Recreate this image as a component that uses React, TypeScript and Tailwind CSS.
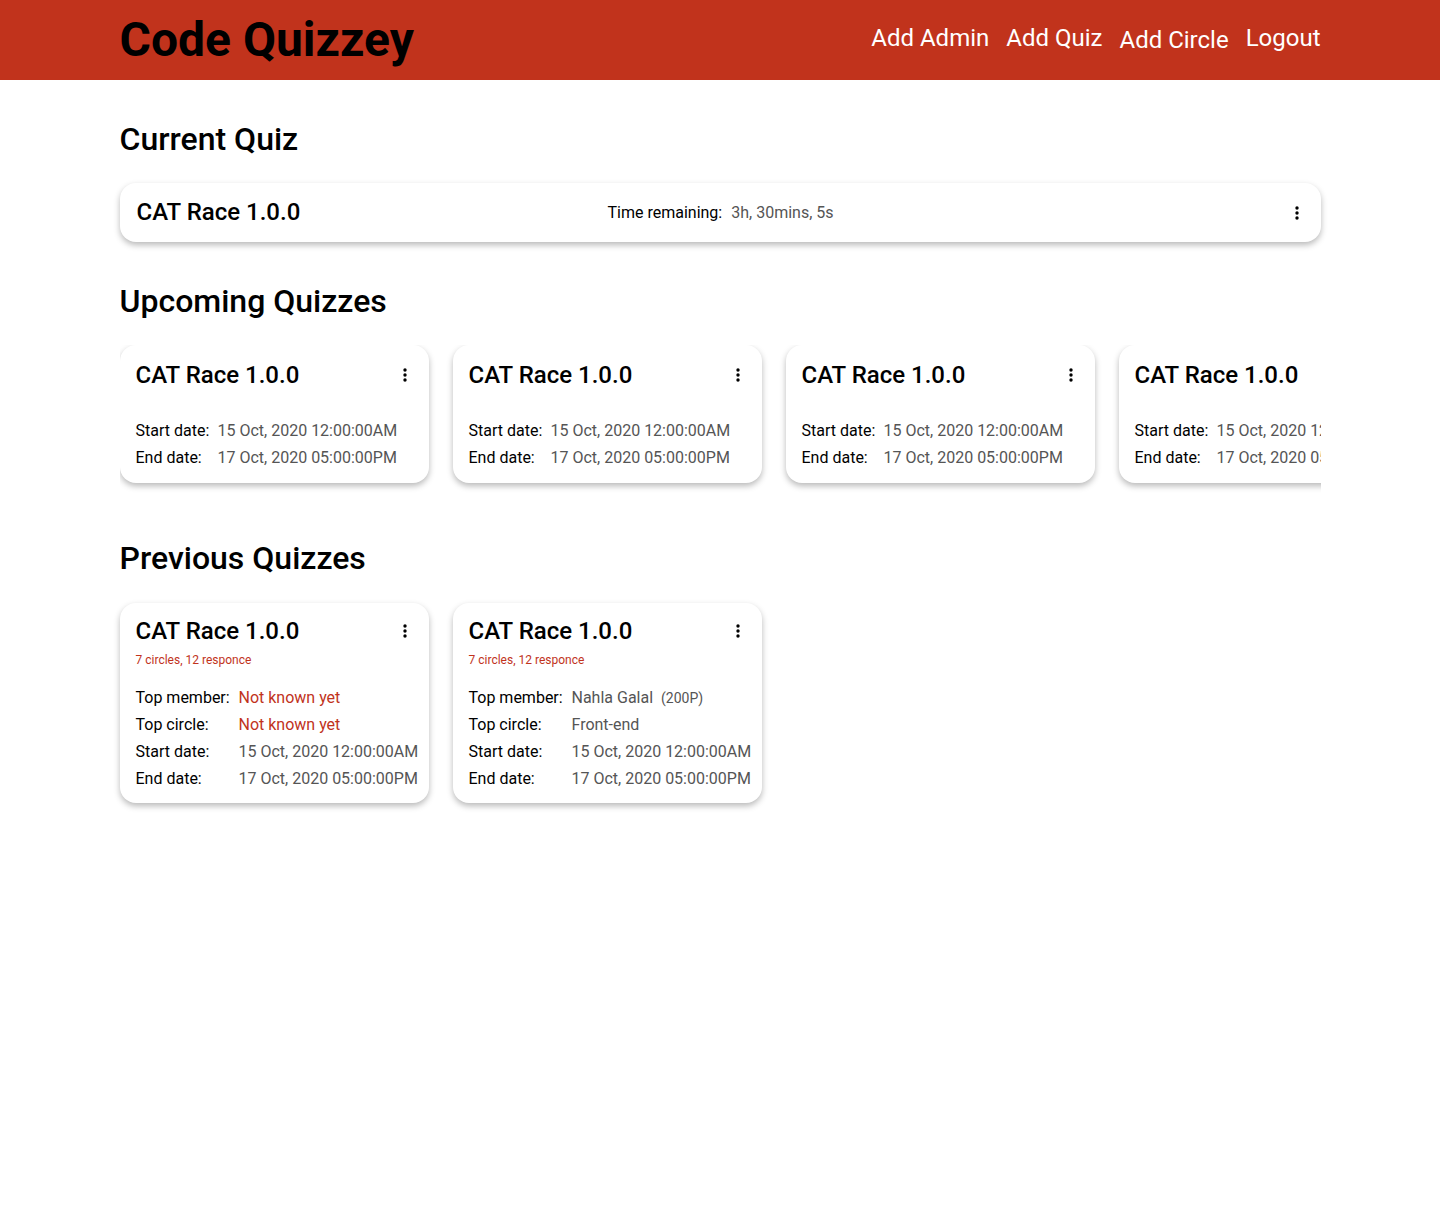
import React from 'react';

const RED = 'text-[#c1331c]';

function Kebab() {
    return (
        <svg width="6" height="16" viewBox="0 0 6 16" className="shrink-0">
            <circle cx="3" cy="3" r="1.7" fill="#000" />
            <circle cx="3" cy="8" r="1.7" fill="#000" />
            <circle cx="3" cy="13" r="1.7" fill="#000" />
        </svg>
    );
}

type Row = { label: string; value: React.ReactNode; red?: boolean };

function QuizCard({ rows, sub, labelW }: { rows: Row[]; sub?: boolean; labelW: string }) {
    return (
        <div
            className={`w-[309px] shrink-0 bg-white rounded-[16px] shadow-[0_3px_6px_rgba(0,0,0,0.28)] pl-4 pr-[21px] ${
                sub ? 'pt-[14px] pb-[11px]' : 'pt-4 pb-3'
            }`}
        >
            <div className="flex items-center justify-between h-[28px]">
                <span className="text-[24px] font-medium leading-[28px] text-black">CAT Race 1.0.0</span>
                <Kebab />
            </div>
            {sub ? (
                <div className={`text-[12px] leading-[16px] mt-[7px] ${RED}`}>7 circles, 12 responce</div>
            ) : null}
            <div className={sub ? 'mt-[16px]' : 'mt-[28px]'}>
                {rows.map((r) => (
                    <div key={r.label} className="flex h-[27px] items-center text-[16px] leading-[27px] whitespace-nowrap">
                        <span className={`${labelW} shrink-0 text-black`}>{r.label}</span>
                        <span className={r.red ? RED : 'text-[#555]'}>{r.value}</span>
                    </div>
                ))}
            </div>
        </div>
    );
}

export default function App() {
    const upcomingRows: Row[] = [
        { label: 'Start date:', value: '15 Oct, 2020 12:00:00AM' },
        { label: 'End date:', value: '17 Oct, 2020 05:00:00PM' },
    ];

    return (
        <div className="min-h-[1209px] bg-white font-['Roboto',sans-serif]">
            <header className="h-[80px] bg-[#c1331c]">
                <div className="w-[1201px] mx-auto h-full flex items-center justify-between">
                    <h1 className="text-[48px] font-bold leading-none text-black -mt-[1px]">Code Quizzey</h1>
                    <nav className="flex items-center gap-[17px] text-[24px] text-white leading-none -mt-[4px]">
                        <span>Add Admin</span>
                        <span>Add Quiz</span>
                        <span className="mt-[4px]">Add Circle</span>
                        <span>Logout</span>
                    </nav>
                </div>
            </header>

            <main className="w-[1201px] mx-auto">
                <h2 className="text-[32px] font-medium leading-[38px] text-black mt-[40px]">Current Quiz</h2>
                <div className="mt-[25px] h-[59px] bg-white rounded-[16px] shadow-[0_3px_6px_rgba(0,0,0,0.28)] pl-[17px] pr-[21px] flex items-center">
                    <span className="w-[471px] text-[24px] font-medium leading-[28px] text-black -mt-[1px]">CAT Race 1.0.0</span>
                    <span className="text-[16px] text-black">Time remaining:</span>
                    <span className="ml-[9px] text-[16px] text-[#555]">3h, 30mins, 5s</span>
                    <span className="ml-auto">
                        <Kebab />
                    </span>
                </div>

                <h2 className="text-[32px] font-medium leading-[38px] text-black mt-[40px]">Upcoming Quizzes</h2>
                <div className="mt-[25px] overflow-hidden pb-4">
                    <div className="flex gap-[24px]">
                        {[0, 1, 2, 3].map((i) => (
                            <QuizCard key={i} rows={upcomingRows} labelW="w-[82px]" />
                        ))}
                    </div>
                </div>

                <h2 className="text-[32px] font-medium leading-[38px] text-black mt-[40px]">Previous Quizzes</h2>
                <div className="mt-[26px] flex gap-[24px] pb-4">
                    <QuizCard
                        sub
                        labelW="w-[103px]"
                        rows={[
                            { label: 'Top member:', value: 'Not known yet', red: true },
                            { label: 'Top circle:', value: 'Not known yet', red: true },
                            { label: 'Start date:', value: '15 Oct, 2020 12:00:00AM' },
                            { label: 'End date:', value: '17 Oct, 2020 05:00:00PM' },
                        ]}
                    />
                    <QuizCard
                        sub
                        labelW="w-[103px]"
                        rows={[
                            {
                                label: 'Top member:',
                                value: (
                                    <>
                                        Nahla Galal <span className="ml-1 text-[14px] leading-none">(200P)</span>
                                    </>
                                ),
                            },
                            { label: 'Top circle:', value: 'Front-end' },
                            { label: 'Start date:', value: '15 Oct, 2020 12:00:00AM' },
                            { label: 'End date:', value: '17 Oct, 2020 05:00:00PM' },
                        ]}
                    />
                </div>
            </main>
        </div>
    );
}
